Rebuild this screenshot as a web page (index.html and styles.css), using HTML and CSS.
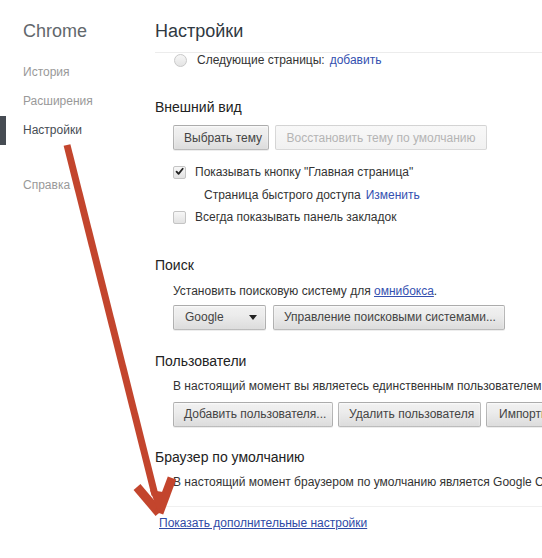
FILE: index.html
```html
<!DOCTYPE html>
<html lang="ru">
<head>
<meta charset="utf-8">
<title>Настройки</title>
<link rel="stylesheet" href="styles.css">
</head>
<body>
<div class="page">
  <nav class="sidebar">
    <div class="brand">Chrome</div>
    <ul class="nav">
      <li class="nav-item">История</li>
      <li class="nav-item">Расширения</li>
      <li class="nav-item selected">Настройки</li>
      <li class="nav-item help">Справка</li>
    </ul>
  </nav>
  <main class="main">
    <header class="header"><h1 class="title">Настройки</h1></header>
    <div class="content">
      <div class="row radio-row"><span class="radio"></span><span>Следующие страницы:</span><a class="link plain">добавить</a></div>

      <section class="section appearance">
        <h3 class="section-title">Внешний вид</h3>
        <div class="btn-row">
          <button class="btn w-theme">Выбрать тему</button>
          <button class="btn disabled w-reset">Восстановить тему по умолчанию</button>
        </div>
        <div class="checks">
          <div class="row check-row"><span class="checkbox checked"><svg viewBox="0 0 13 13" width="13" height="13"><path d="M3 6.6 L5.4 9.3 L10.3 3.2" fill="none" stroke="#222" stroke-width="2.1" stroke-linecap="round" stroke-linejoin="round"/></svg></span><span>Показывать кнопку "Главная страница"</span></div>
          <div class="row sub-row"><span>Страница быстрого доступа</span><a class="link plain">Изменить</a></div>
          <div class="row check-row"><span class="checkbox"></span><span>Всегда показывать панель закладок</span></div>
        </div>
      </section>

      <section class="section search">
        <h3 class="section-title">Поиск</h3>
        <p class="text-row">Установить поисковую систему для <a class="link">омнибокса</a>.</p>
        <div class="btn-row tight">
          <button class="btn select w-select"><span>Google</span><span class="caret"></span></button>
          <button class="btn w-engines">Управление поисковыми системами...</button>
        </div>
      </section>

      <section class="section users">
        <h3 class="section-title">Пользователи</h3>
        <p class="text-row">В настоящий момент вы являетесь единственным пользователем Google Chrome.</p>
        <div class="btn-row tight gap5">
          <button class="btn w-add">Добавить пользователя...</button>
          <button class="btn w-del">Удалить пользователя</button>
          <button class="btn w-imp">Импортировать закладки и настройки</button>
        </div>
      </section>

      <section class="section browser">
        <h3 class="section-title">Браузер по умолчанию</h3>
        <p class="text-row">В настоящий момент браузером по умолчанию является Google Chrome.</p>
      </section>
    </div>
    <footer class="footer"><a class="link more">Показать дополнительные настройки</a></footer>
  </main>
</div>
<svg class="arrow" width="542" height="558" viewBox="0 0 542 558">
  <line x1="67" y1="145" x2="155" y2="495" stroke="#c3452d" stroke-width="7"/>
  <line x1="159" y1="513" x2="137" y2="487" stroke="#c3452d" stroke-width="9"/>
  <line x1="159" y1="513" x2="172" y2="478" stroke="#c3452d" stroke-width="9"/>
  <polygon points="150,490 163,492 159,514" fill="#c3452d"/>
</svg>
</body>
</html>
```
FILE: styles.css
```css
* { box-sizing: border-box; }
body {
  margin: 0;
  width: 542px;
  height: 558px;
  overflow: hidden;
  position: relative;
  background: #fff;
  font-family: "Liberation Sans", Arial, sans-serif;
  font-size: 12px;
  color: #333;
}
.page { display: flex; height: 100%; }
.sidebar { width: 155px; flex: none; }
.brand {
  height: 58px;
  line-height: 62px;
  padding-left: 23px;
  font-size: 18px;
  color: #62676c;
}
.nav { list-style: none; margin: 0; padding: 0; }
.nav-item {
  height: 29px;
  line-height: 29px;
  padding-left: 23px;
  font-size: 12px;
  color: #999;
}
.nav-item.selected {
  border-left: 6px solid #464c53;
  padding-left: 17px;
  color: #464c53;
}
.nav-item.help { margin-top: 26px; }

.main { flex: 1; min-width: 0; white-space: nowrap; }
.header { height: 53px; border-bottom: 1px solid #ececec; }
.title {
  margin: 0;
  padding-top: 21px;
  line-height: 20px;
  font-size: 18px;
  font-weight: normal;
  color: #303942;
}
.content { padding-left: 18px; }
.row { display: flex; align-items: center; }
.radio-row { height: 14px; }
.radio {
  width: 13px; height: 13px; flex: none;
  border-radius: 50%;
  border: 1px solid #c9c9c9;
  background: linear-gradient(#f6f6f6, #e4e4e4);
  margin: 0 10px 0 1px;
}
.link { color: #3450b0; text-decoration: underline; cursor: pointer; }
.link.plain { text-decoration: none; margin-left: 5px; }

.section-title {
  margin: 0 0 0 -18px;
  height: 20px;
  line-height: 20px;
  font-size: 14px;
  font-weight: normal;
  color: #222;
}
.appearance { margin-top: 30px; }
.search { margin-top: 26px; }
.users { margin-top: 21px; }
.browser { margin-top: 20px; }

.btn-row { display: flex; gap: 6px; margin-top: 8px; }
.btn-row.tight { margin-top: 3px; gap: 7px; }
.btn-row.gap5 { margin-top: 5px; gap: 5px; }
.btn {
  flex: none;
  height: 25px;
  padding: 0 10px;
  border: 1px solid rgba(0,0,0,0.22);
  border-radius: 2px;
  background: linear-gradient(#f1f1f1, #ececec 40%, #dcdcdc);
  box-shadow: 0 1px 0 rgba(0,0,0,0.07), inset 0 1px 2px rgba(255,255,255,0.8);
  font-family: inherit;
  font-size: 12px;
  color: #444;
  text-align: center;
  white-space: nowrap;
  overflow: hidden;
}
.btn.disabled {
  color: #b4b4b4;
  border-color: rgba(0,0,0,0.12);
  background: linear-gradient(#f8f8f8, #f1f1f1);
  box-shadow: none;
}
.w-theme { width: 96px; }
.w-reset { width: 212px; }
.w-select { width: 93px; }
.w-engines { width: 232px; }
.w-add { width: 160px; }
.w-del { width: 143px; }
.w-imp { width: 240px; text-align: left; padding-left: 12px; }
.btn.select {
  display: flex;
  align-items: center;
  justify-content: space-between;
  padding: 0 8px 0 11px;
}
.caret {
  width: 0; height: 0;
  border-left: 4.5px solid transparent;
  border-right: 4.5px solid transparent;
  border-top: 5px solid #222;
}

.checks { margin-top: 11px; }
.check-row { height: 22.5px; }
.sub-row { height: 22.5px; padding-left: 31px; }
.checkbox {
  width: 13px; height: 13px; flex: none;
  border: 1px solid #c4c4c4;
  border-radius: 2px;
  background: linear-gradient(#f7f7f7, #e2e2e2);
  margin-right: 9px;
  display: flex;
  align-items: center;
  justify-content: center;
}
.checkbox svg { display: block; margin-top: -1px; }
.text-row { margin: 4px 0 0; height: 22px; line-height: 22px; }
.search .text-row { margin-top: 5px; }

.footer {
  margin-top: 13px;
  border-top: 1px solid #f0f0f0;
  padding: 5px 0 0 4px;
  height: 28px;
  line-height: 22px;
}
.more { color: #2f4aa6; }

.arrow { position: absolute; left: 0; top: 0; pointer-events: none; }
```
